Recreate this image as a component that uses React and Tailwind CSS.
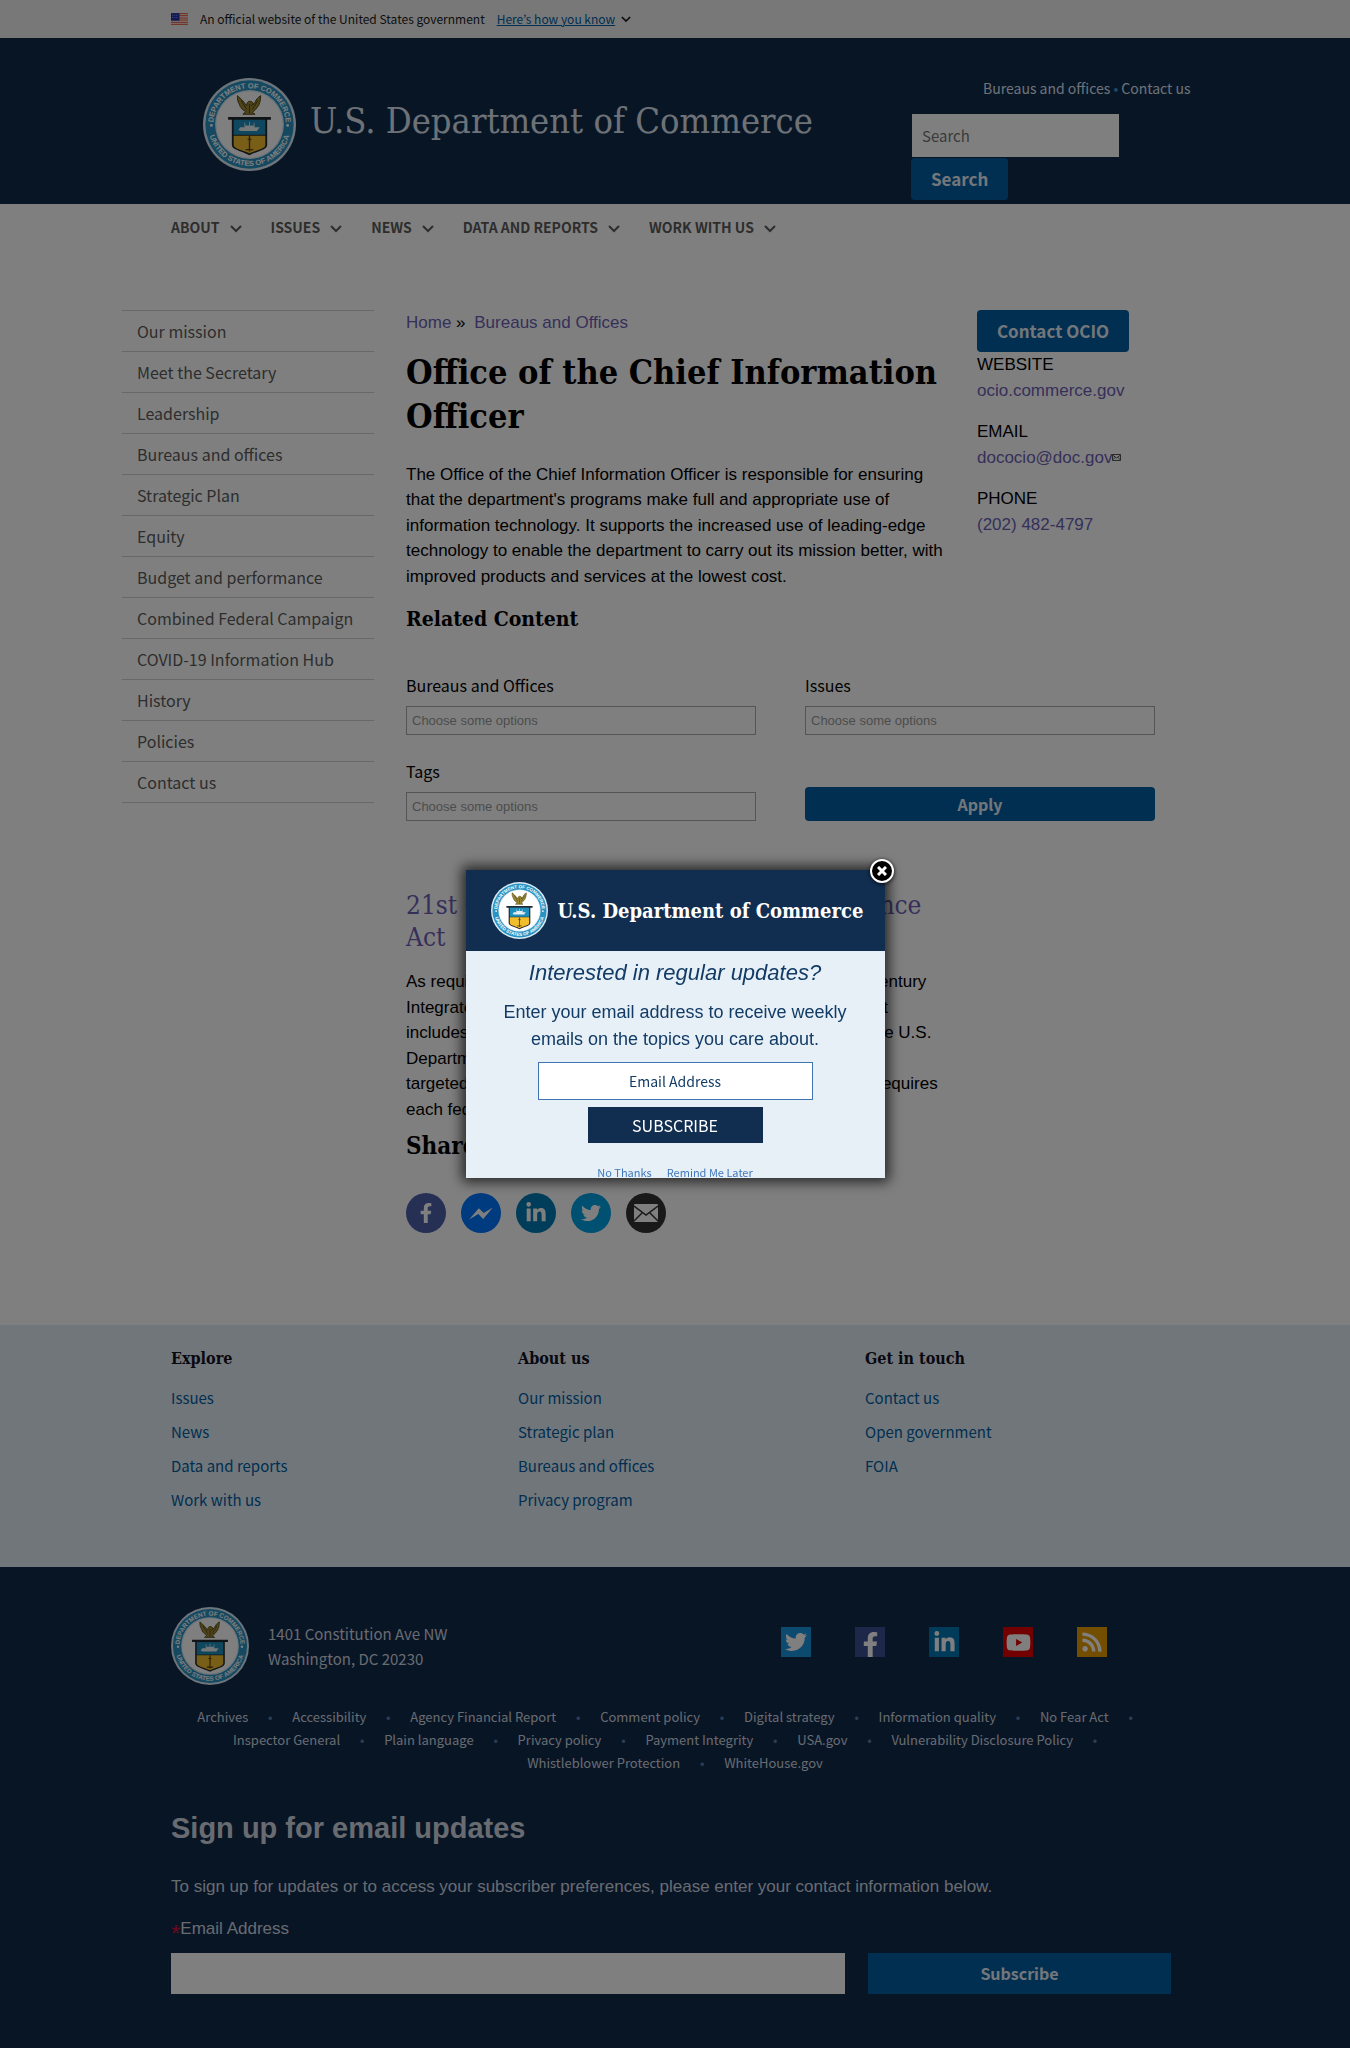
import React from "react";
import { FaTwitter, FaFacebookF, FaLinkedinIn, FaYoutube, FaRss } from "react-icons/fa";

const SANS = "font-['Noto_Sans_CJK_KR','Open_Sans',sans-serif]";
const SERIF = "font-['DejaVu_Serif_Condensed','DejaVu_Serif',serif]";

const NAV = ["ABOUT", "ISSUES", "NEWS", "DATA AND REPORTS", "WORK WITH US"];

const SIDE = [
  "Our mission",
  "Meet the Secretary",
  "Leadership",
  "Bureaus and offices",
  "Strategic Plan",
  "Equity",
  "Budget and performance",
  "Combined Federal Campaign",
  "COVID-19 Information Hub",
  "History",
  "Policies",
  "Contact us",
];

const COLUMNS = [
  { title: "Explore", links: ["Issues", "News", "Data and reports", "Work with us"] },
  { title: "About us", links: ["Our mission", "Strategic plan", "Bureaus and offices", "Privacy program"] },
  { title: "Get in touch", links: ["Contact us", "Open government", "FOIA"] },
];

const LEGAL = [
  "Archives",
  "Accessibility",
  "Agency Financial Report",
  "Comment policy",
  "Digital strategy",
  "Information quality",
  "No Fear Act",
  "Inspector General",
  "Plain language",
  "Privacy policy",
  "Payment Integrity",
  "USA.gov",
  "Vulnerability Disclosure Policy",
  "Whistleblower Protection",
  "WhiteHouse.gov",
];

function Seal({ id, className }) {
  return (
    <svg viewBox="0 0 100 100" className={className} role="img" aria-label="Department of Commerce seal">
      <defs>
        <path id={`${id}-top`} d="M11 50a39 39 0 0 1 78 0" />
        <path id={`${id}-bottom`} d="M5.500 50a44.500 44.500 0 0 0 89 0" />
      </defs>
      <circle cx="50" cy="50" r="50" fill="#dcebf5" />
      <circle cx="50" cy="50" r="47.500" fill="#2b93c2" />
      <circle cx="50" cy="50" r="37" fill="#dcebf5" />
      <circle cx="50" cy="50" r="35.500" fill="#fff" />
      <g fill="#fff" fontFamily="Liberation Sans, sans-serif" fontWeight="700" fontSize="8" textAnchor="middle">
        <text>
          <textPath href={`#${id}-top`} startOffset="50%">DEPARTMENT OF COMMERCE</textPath>
        </text>
        <text>
          <textPath href={`#${id}-bottom`} startOffset="50%">UNITED STATES OF AMERICA</textPath>
        </text>
      </g>
      <path d="M37 19c2 2 5 4 7 7l3 4c0-3 1-5 3-5s4 1 4 3l-2 2 4-4c1-3 3-5 6-7 0 5-1 10-4 13-2 3-4 4-5 5l3 2H43l3-3c-3-1-6-4-7-8-2-3-2-6-2-9z" fill="#9a8a32" stroke="#4f4418" strokeWidth="1" />
      <path d="M41 24l6 10M59 24l-6 10M50 28v10" stroke="#5a3f17" strokeWidth="1" fill="none" />
      <path d="M27 42h46v3h-4v27c0 5-9 6-19 11-10-5-19-6-19-11V45h-4z" fill="#23292e" />
      <path d="M33 45h34v16H33z" fill="#1f8fbd" />
      <path d="M33 62h34v10c0 4-8 5-17 9-9-4-17-5-17-9z" fill="#f0bd2c" />
      <path d="M38 56l2-3h5v-2h10v2h6l-3 4H41z" fill="#e9f0f3" />
      <path d="M45 48v5M50 47v6M55 48v5" stroke="#d6e3ea" strokeWidth="1" />
      <path d="M50 62v17M48 66h4M46 77h8" stroke="#5a4210" strokeWidth="1.500" fill="none" />
      <circle cx="9" cy="51" r="1.500" fill="#fff" />
      <circle cx="91" cy="51" r="1.500" fill="#fff" />
    </svg>
  );
}

function Flag() {
  return (
    <svg viewBox="0 0 16 11" className="h-[12px] w-[17px]" aria-hidden="true">
      <rect width="16" height="11" fill="#fff" />
      <path d="M0 .5h16M0 2.500h16M0 4.500h16M0 6.500h16M0 8.500h16M0 10.500h16" stroke="#db3e1f" />
      <rect width="8" height="7" fill="#1e33b1" />
      <path d="M1 2h6M1 4h6" stroke="#8a96d8" strokeDasharray="1 1" />
    </svg>
  );
}

function Chevron({ className }) {
  return (
    <svg viewBox="0 0 12 8" className={className} fill="none" stroke="currentColor" strokeWidth="2" aria-hidden="true">
      <path d="M1 1l5 5 5-5" />
    </svg>
  );
}

function MessengerMark() {
  return (
    <svg viewBox="0 0 24 24" className="h-[26px] w-[26px]" fill="currentColor" aria-hidden="true">
      <path d="M1 18L10 7.500l4.500 4.500L23 7l-9 10.500-4.500-4.500z" />
    </svg>
  );
}

function MailMark() {
  return (
    <svg viewBox="0 0 24 18" className="h-[18px] w-[24px]" aria-hidden="true">
      <rect width="24" height="18" rx="1" fill="#fff" />
      <path d="M0 2l12 9 12-9M0 17l8-8M24 17l-8-8" fill="none" stroke="#333" strokeWidth="1.500" />
    </svg>
  );
}

const SHARE = [
  { name: "Facebook", bg: "bg-[#4a60a8]", icon: <FaFacebookF size={20} /> },
  { name: "Messenger", bg: "bg-[#0075ff]", icon: <MessengerMark /> },
  { name: "LinkedIn", bg: "bg-[#007bb5]", icon: <FaLinkedinIn size={22} /> },
  { name: "Twitter", bg: "bg-[#00a0e3]", icon: <FaTwitter size={20} /> },
  { name: "Email", bg: "bg-[#333333]", icon: <MailMark /> },
];

const SOCIAL = [
  { name: "Twitter", bg: "bg-[#1b95e0] items-center", icon: <FaTwitter size={22} /> },
  { name: "Facebook", bg: "bg-[#3b4f92] items-end", icon: <FaFacebookF size={25} /> },
  { name: "LinkedIn", bg: "bg-[#0077b5] items-center", icon: <FaLinkedinIn size={23} /> },
  { name: "YouTube", bg: "bg-[#e60000] items-center", icon: <FaYoutube size={25} /> },
  { name: "RSS", bg: "bg-[#e69a00] items-center", icon: <FaRss size={22} /> },
];

function ChosenField({ id, label }) {
  return (
    <div className="flex flex-col gap-[9px]">
      <label htmlFor={id} className={`${SANS} text-[16px] leading-6 text-black`}>{label}</label>
      <input
        id={id}
        type="text"
        placeholder="Choose some options"
        className="h-[29px] w-full border border-[#aaaaaa] bg-white px-[5px] text-[13px] text-black placeholder:text-[#999999]"
      />
    </div>
  );
}

function Page() {
  return (
    <div className="flex min-h-screen flex-col bg-white text-[17px] leading-normal text-[#1b1b1b]">
      <div className="bg-[#f0f0f0]">
        <div className={`${SANS} mx-auto flex h-[38px] max-w-[1008px] items-center text-[12px]`}>
          <Flag />
          <span className="ml-3">An official website of the United States government</span>
          <button type="button" className="ml-3 flex items-center gap-[6px] text-[#005ea2]">
            <span className="underline">Here’s how you know</span>
            <Chevron className="h-[7px] w-[10px] text-[#1b1b1b]" />
          </button>
        </div>
      </div>

      <header className="bg-[#112a4b] text-[#dce4ef]">
        <div className="mx-auto flex max-w-[1008px] justify-between pt-10 pb-1">
          <a href="#home" className="ml-8 flex items-start gap-[14px]">
            <Seal id="header-seal" className="h-[93px] w-[93px]" />
            <span className={`${SERIF} mt-[18px] text-[36px] leading-[50px] whitespace-nowrap`}>U.S. Department of Commerce</span>
          </a>
          <div className={`${SANS} w-[268px]`}>
            <p className="ml-[72px] text-[14px] leading-5 whitespace-nowrap">
              <a href="#bureaus">Bureaus and offices</a>
              <span className="text-[#3e94cf]"> • </span>
              <a href="#contact">Contact us</a>
            </p>
            <form className="mt-4" onSubmit={(e) => e.preventDefault()}>
              <input
                type="search"
                aria-label="Search"
                placeholder="Search"
                className="ml-px block h-[43px] w-[207px] bg-white px-[10px] text-[15px] text-black placeholder:text-[#757575]"
              />
              <button type="submit" className="mt-px h-[42px] rounded-[4px] bg-[#005ea2] px-5 text-[17px] leading-6 font-bold text-[#e6eef7]">
                Search
              </button>
            </form>
          </div>
        </div>
      </header>

      <nav className="mx-auto w-full max-w-[1008px] pt-[13px]">
        <ul className={`${SANS} flex gap-[29px] text-[14px] leading-5 font-bold text-[#5b5b5b]`}>
          {NAV.map((n) => (
            <li key={n}>
              <button type="button" className="flex items-center gap-[10px]">
                {n}
                <Chevron className="mt-1 h-[8px] w-[12px]" />
              </button>
            </li>
          ))}
        </ul>
      </nav>

      <main className="mx-auto grid w-full max-w-[1106px] grid-cols-[252px_minmax(0,1fr)] gap-8 pt-[73px] pb-[92px]">
        <ul className={`${SANS} self-start border-b border-[#d0d0d0] text-[16px] text-[#5b5b5b]`}>
          {SIDE.map((s) => (
            <li key={s} className="border-t border-[#d0d0d0]">
              <a href="#section" className="block px-[15px] pt-2 pb-2 leading-6">{s}</a>
            </li>
          ))}
        </ul>

        <div className="text-black">
          <div className="flex gap-[33px]">
            <article className="w-[538px]">
              <p>
                <a href="#home" className="text-[#6d5fb4]">Home</a> »{" "}
                <a href="#bureaus" className="ml-1 text-[#6d5fb4]">Bureaus and Offices</a>
              </p>
              <h1 className={`${SERIF} mt-[14px] text-[34px] leading-[44px] font-bold`}>
                Office of the Chief Information Officer
              </h1>
              <p className="mt-6">
                The Office of the Chief Information Officer is responsible for ensuring that the department's programs
                make full and appropriate use of information technology. It supports the increased use of leading-edge
                technology to enable the department to carry out its mission better, with improved products and services
                at the lowest cost.
              </p>
            </article>
            <aside>
              <a
                href="#contact"
                className={`${SANS} block w-[152px] rounded-[4px] bg-[#005ea2] py-[9px] text-center text-[17px] leading-6 font-bold text-[#e6eef7]`}
              >
                Contact OCIO
              </a>
              <dl>
                <dt>WEBSITE</dt>
                <dd className="mb-4 text-[#6d5fb4]"><a href="#site">ocio.commerce.gov</a></dd>
                <dt>EMAIL</dt>
                <dd className="mb-4 text-[#6d5fb4]">
                  <a href="#mail" className="flex items-center">
                    dococio@doc.gov
                    <svg viewBox="0 0 9 7" className="h-[7px] w-[9px]" fill="none" stroke="#555" aria-hidden="true">
                      <path d="M.5 .5h8v6h-8zM.5 1l4 3 4-3M.5 6l3-3M8.500 6l-3-3" />
                    </svg>
                  </a>
                </dd>
                <dt>PHONE</dt>
                <dd className="text-[#6d5fb4]"><a href="#phone">(202) 482-4797</a></dd>
              </dl>
            </aside>
          </div>

          <h2 className={`${SERIF} mt-4 text-[21px] leading-7 font-bold`}>Related Content</h2>
          <form
            className="mt-10 grid max-w-[749px] grid-cols-2 gap-x-[49px] gap-y-6"
            onSubmit={(e) => e.preventDefault()}
          >
            <ChosenField id="f-bureaus" label="Bureaus and Offices" />
            <ChosenField id="f-issues" label="Issues" />
            <ChosenField id="f-tags" label="Tags" />
            <button type="submit" className={`${SANS} h-[34px] self-end rounded-[4px] bg-[#005ea2] text-[16px] leading-6 font-bold text-[#e6eef7]`}>
              Apply
            </button>
          </form>

          <div className="mt-[68px] max-w-[545px]">
            <h2 className={`${SERIF} text-[26px] leading-8 whitespace-nowrap text-[#6d5fb4]`}>
              <a href="#act">21st Century Integrated Digital Experience<br />Act</a>
            </h2>
            <p className="mt-4 whitespace-nowrap">
              As required by Sections 3(d) of Public Law 115-336, the 21st Century<br />
              Integrated Digital Experience Act, and the following digital report<br />
              includes the digital modernization status of all the websites in the U.S.<br />
              Department of Commerce and the steps that are<br />
              targeted for improving them in the coming years. This Act also requires<br />
              each federal agency to report annually to the public.
            </p>
          </div>
          <h2 className={`${SERIF} mt-2 text-[24px] leading-8 font-bold`}>Share this page</h2>
          <ul className="mt-[31px] flex gap-[15px]">
            {SHARE.map((s) => (
              <li key={s.name}>
                <a href="#share" aria-label={s.name} className={`flex h-10 w-10 items-center justify-center rounded-full text-white ${s.bg}`}>
                  {s.icon}
                </a>
              </li>
            ))}
          </ul>
        </div>
      </main>

      <footer className="flex grow flex-col">
        <div className="bg-[#e2edf7] pt-[22px] pb-[50px]">
          <div className="mx-auto grid max-w-[1008px] grid-cols-[repeat(2,347px)_1fr]">
            {COLUMNS.map((c) => (
              <section key={c.title}>
                <h3 className={`${SERIF} text-[16px] leading-6 font-bold text-[#112]`}>{c.title}</h3>
                <ul className={`${SANS} mt-[10px] text-[15px] leading-[34px] text-[#005ea2]`}>
                  {c.links.map((l) => (
                    <li key={l}><a href="#link">{l}</a></li>
                  ))}
                </ul>
              </section>
            ))}
          </div>
        </div>

        <div className="grow bg-[#112a4b] pt-10 pb-[52px] text-[#d0d7e0]">
          <div className="mx-auto max-w-[1008px]">
            <div className="flex items-start">
              <Seal id="footer-seal" className="h-[78px] w-[78px]" />
              <address className={`${SANS} mt-[14px] ml-[19px] flex-1 text-[15px] leading-[25px] not-italic`}>
                1401 Constitution Ave NW<br />
                Washington, DC 20230
              </address>
              <ul className="mt-5 mr-[72px] flex gap-11">
                {SOCIAL.map((s) => (
                  <li key={s.name}>
                    <a href="#social" aria-label={s.name} className={`flex h-[30px] w-[30px] justify-center text-white ${s.bg}`}>
                      {s.icon}
                    </a>
                  </li>
                ))}
              </ul>
            </div>

            <ul className={`${SANS} mt-5 flex flex-wrap justify-center text-[13px] leading-[23px]`}>
              {LEGAL.map((l, i) => (
                <li key={l} className="flex">
                  <a href="#legal">{l}</a>
                  {i < LEGAL.length - 1 && <span className="w-[44px] text-center text-[#5b7fa3]">•</span>}
                </li>
              ))}
            </ul>

            <h2 className="mt-9 text-[29px] leading-9 font-bold">Sign up for email updates</h2>
            <p className="mt-7">
              To sign up for updates or to access your subscriber preferences, please enter your contact information below.
            </p>
            <form className="mt-4" onSubmit={(e) => e.preventDefault()}>
              <label htmlFor="footer-email" className="flex h-[26px] items-center">
                <span className="h-[18px] text-[24px] leading-7 text-[#d0103a]">*</span>Email Address
              </label>
              <div className="mt-[11px] flex gap-[23px]">
                <input id="footer-email" type="email" className="h-[41px] w-[674px] bg-white px-2 text-black" />
                <button type="submit" className={`${SANS} w-[303px] bg-[#005ea2] text-[16px] font-bold text-[#e6eef7]`}>
                  Subscribe
                </button>
              </div>
            </form>
          </div>
        </div>
      </footer>
    </div>
  );
}

function SubscribeDialog() {
  return (
    <div className="fixed inset-0 flex items-center justify-center bg-black/50">
      <div role="dialog" aria-label="Email updates" className="relative w-[419px] bg-[#e7f0f6] shadow-[0_0_12px_4px_rgba(0,0,0,0.7)]">
        <button
          type="button"
          aria-label="Close"
          className="absolute -top-[11px] -right-[9px] flex h-[24px] w-[24px] items-center justify-center rounded-full border-2 border-white bg-black text-white shadow-[0_1px_4px_rgba(0,0,0,0.8)]"
        >
          <svg viewBox="0 0 10 10" className="h-[10px] w-[10px]" stroke="currentColor" strokeWidth="3" aria-hidden="true">
            <path d="M1 1l8 8M9 1l-8 8" />
          </svg>
        </button>
        <div className="flex h-[81px] items-center bg-[#112e51] pl-[25px]">
          <Seal id="dialog-seal" className="h-[57px] w-[57px]" />
          <span className={`${SERIF} ml-[10px] text-[20px] leading-6 font-bold whitespace-nowrap text-white`}>
            U.S. Department of Commerce
          </span>
        </div>
        <form className="flex h-[227px] flex-col items-center overflow-hidden text-center text-[#123b66]" onSubmit={(e) => e.preventDefault()}>
          <p className="mt-[6px] text-[22px] leading-8 italic">Interested in regular updates?</p>
          <p className="mt-[10px] w-[360px] text-[18px] leading-[27px]">
            Enter your email address to receive weekly emails on the topics you care about.
          </p>
          <input
            type="email"
            aria-label="Email Address"
            placeholder="Email Address"
            className={`${SANS} mt-[9px] h-[38px] w-[275px] shrink-0 border border-[#3f74b5] bg-white text-center text-[14px] placeholder:text-[#123b66]`}
          />
          <button type="submit" className={`${SANS} mt-[7px] h-[36px] w-[175px] shrink-0 bg-[#112e51] text-[16px] leading-6 text-white`}>
            SUBSCRIBE
          </button>
          <div className={`${SANS} mt-[21px] flex gap-[15px] text-[11px] leading-4 text-[#3f78bd]`}>
            <a href="#no">No Thanks</a>
            <a href="#later">Remind Me Later</a>
          </div>
        </form>
      </div>
    </div>
  );
}

export default function App() {
  return (
    <div className="font-['Liberation_Sans',Arial,sans-serif]">
      <Page />
      <SubscribeDialog />
    </div>
  );
}
